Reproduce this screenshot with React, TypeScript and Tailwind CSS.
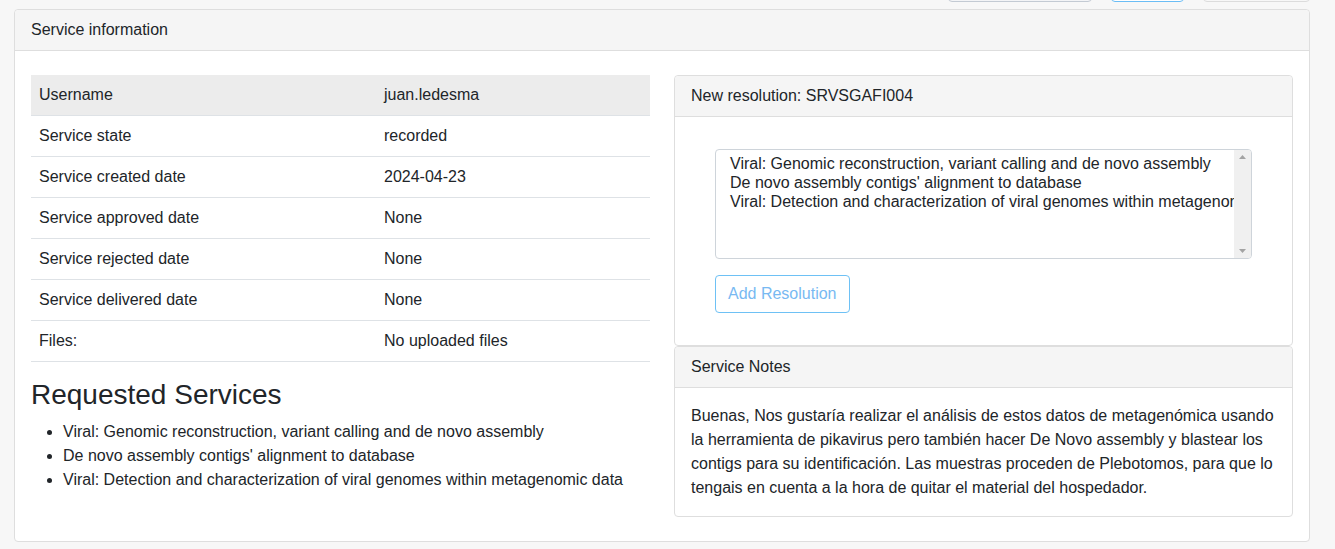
const rows: [string, string][] = [
  ['Username', 'juan.ledesma'],
  ['Service state', 'recorded'],
  ['Service created date', '2024-04-23'],
  ['Service approved date', 'None'],
  ['Service rejected date', 'None'],
  ['Service delivered date', 'None'],
  ['Files:', 'No uploaded files'],
]

const services = [
  'Viral: Genomic reconstruction, variant calling and de novo assembly',
  "De novo assembly contigs' alignment to database",
  'Viral: Detection and characterization of viral genomes within metagenomic data',
]

const font = { fontFamily: '"Liberation Sans", Arial, Helvetica, sans-serif' }

export default function App() {
  return (
    <main className="min-h-[549px] bg-[#f7f7f7] text-[#212529] text-[16px] leading-[24px]" style={font}>
      {/* toolbar buttons, mostly scrolled out of view */}
      <div className="flex justify-end gap-[19px] pr-[25px] h-[9px]">
        <button className="-mt-[33px] h-[35px] w-[144px] rounded border border-[#c3cad3] bg-[#f3f4f6]" />
        <button className="-mt-[33px] h-[35px] w-[73px] rounded border border-[#6bbdf5] bg-white" />
        <button className="-mt-[33px] h-[35px] w-[107px] rounded border border-[#dcdcdc] bg-[#f7f7f7]" />
      </div>

      <section className="ml-[14px] w-[1296px] rounded border border-[#dedede] bg-white">
        <div className="border-b border-[#dedede] bg-[#f5f5f5] px-4 py-2 rounded-t">Service information</div>
        <div className="grid grid-cols-2 gap-x-[24px] px-4 pt-6 pb-6">
          <div>
            <table className="w-full border-collapse">
              <tbody>
                {rows.map(([k, v], i) => (
                  <tr key={k} className={i === 0 ? 'bg-[#ececec]' : 'border-t border-[#dee2e6]'}>
                    <td className="w-[345px] px-2 py-2">{k}</td>
                    <td className="px-2 py-2">{v}</td>
                  </tr>
                ))}
                <tr className="border-t border-[#dee2e6]">
                  <td colSpan={2} className="h-0 p-0" />
                </tr>
              </tbody>
            </table>
            <h3 className="mt-[16px] mb-[8px] text-[28px] leading-[34px]">Requested Services</h3>
            <ul className="list-disc pl-[32px]">
              {services.map((s) => (
                <li key={s}>{s}</li>
              ))}
            </ul>
          </div>

          <div>
            <div className="rounded border border-[#dedede] bg-white">
              <div className="border-b border-[#dedede] bg-[#f5f5f5] px-4 py-2 rounded-t">New resolution: SRVSGAFI004</div>
              <div className="px-[40px] pt-[32px] pb-[32px]">
                <div className="flex h-[110px] w-[537px] overflow-hidden rounded border border-[#ced4da] bg-white">
                  <textarea
                    readOnly
                    wrap="off"
                    className="flex-1 resize-none overflow-hidden whitespace-pre pl-[14px] pt-[4px] text-[16px] leading-[19px] text-[#212529] outline-none"
                    style={font}
                    value={services.join('\n')}
                  />
                  <div className="flex w-[17px] flex-col items-center justify-between bg-[#f0f0f0] py-[5px]">
                    <svg width="7" height="4" viewBox="0 0 7 4"><path d="M0 4L3.5 0L7 4Z" fill="#a3a3a3" /></svg>
                    <svg width="7" height="4" viewBox="0 0 7 4"><path d="M0 0L3.5 4L7 0Z" fill="#a3a3a3" /></svg>
                  </div>
                </div>
                <button className="mt-[16px] h-[38px] rounded border border-[#6ec1f5] px-[12px] text-[16px] text-[#78b9f2]" style={font}>
                  Add Resolution
                </button>
              </div>
            </div>
            <div className="rounded border border-[#dedede] bg-white">
              <div className="border-b border-[#dedede] bg-[#f5f5f5] px-4 py-2 rounded-t">Service Notes</div>
              <p className="px-4 pt-[16px] pb-[16px]">
                Buenas, Nos gustaría realizar el análisis de estos datos de metagenómica usando la herramienta de
                pikavirus pero también hacer De Novo assembly y blastear los contigs para su identificación. Las
                muestras proceden de Plebotomos, para que lo tengais en cuenta a la hora de quitar el material del
                hospedador.
              </p>
            </div>
          </div>
        </div>
      </section>
    </main>
  )
}
